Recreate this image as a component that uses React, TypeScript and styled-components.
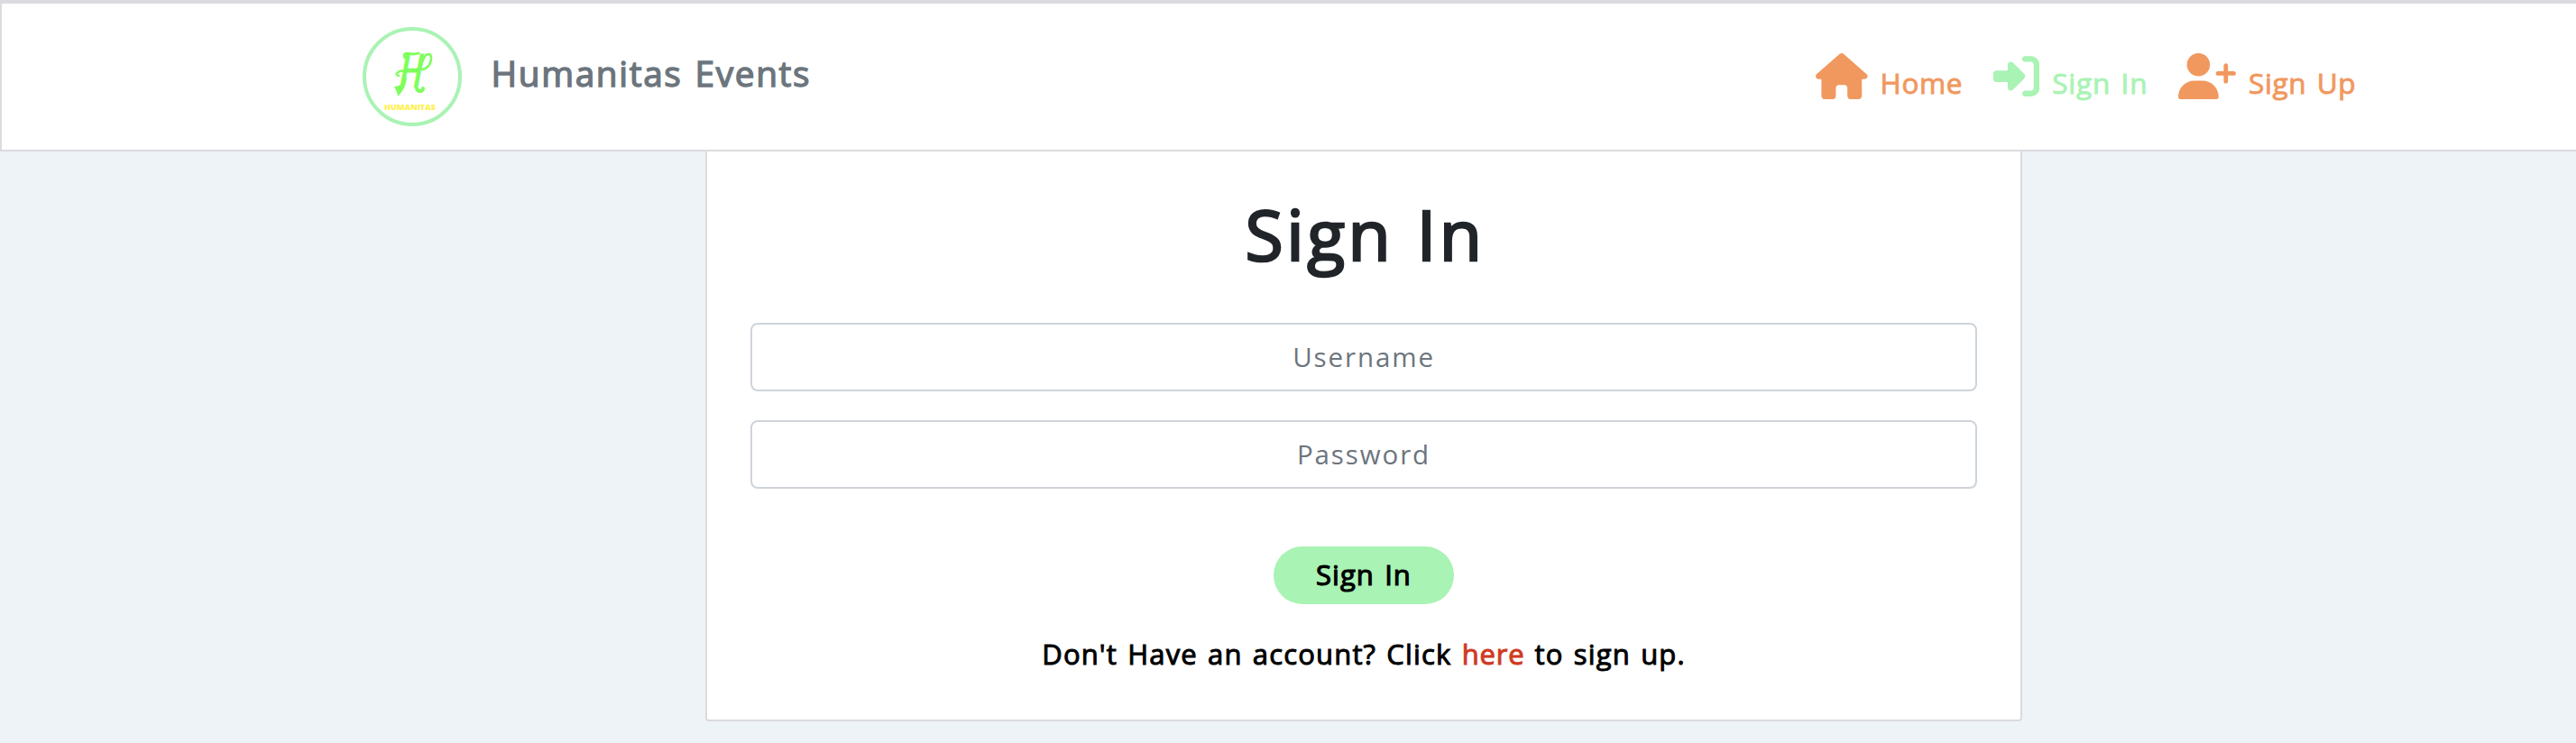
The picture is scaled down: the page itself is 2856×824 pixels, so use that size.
import React from "react";
import styled, { createGlobalStyle } from "styled-components";
import { FaHouse, FaRightToBracket, FaUserPlus } from "react-icons/fa6";

const GlobalStyle = createGlobalStyle`
  *, *::before, *::after { box-sizing: border-box; }
  body {
    margin: 0;
    background: #eef3f7;
    font-family: "Open Sans", "Liberation Sans", sans-serif;
  }
`;

const Page = styled.div`
  min-height: 824px;
`;

const NavBar = styled.header`
  display: flex;
  align-items: flex-start;
  height: 168px;
  padding: 0 238px 0 400px;
  background: #fff;
  border: solid #dbdbdf;
  border-width: 4px 0 2px 2px;
`;

const Brand = styled.a`
  display: flex;
  align-items: center;
  margin-top: 26px;
`;

const Logo = styled.svg`
  display: block;
  width: 110px;
  height: 110px;
`;

const LogoName = styled.text`
  font: 800 8.4px "Open Sans", sans-serif;
  fill: #fff04a;
`;

const Monogram = styled.text`
  font: italic bold 52px Lato, sans-serif;
  fill: #7dff5c;
`;

const BrandName = styled.span`
  margin: -9px 0 0 32.5px;
  font-size: 38.8px;
  line-height: 52px;
  letter-spacing: 1.62px;
  word-spacing: 2.5px;
  color: #6c757d;
  -webkit-text-stroke: 1.4px currentColor;
`;

const Links = styled.nav`
  display: grid;
  grid-template-columns: 197px 205px 203px;
  margin: 55px 0 0 auto;
`;

const NavLink = styled.a<{ $active?: boolean; $iconWidth: number }>`
  display: flex;
  align-items: flex-start;
  gap: 14px;
  color: ${(p) => (p.$active ? "#a9f3b4" : "#f1985f")};

  svg {
    flex: none;
    width: ${(p) => p.$iconWidth}px;
    height: 51.2px;
  }
`;

const LinkLabel = styled.span<{ $spacing: number }>`
  margin-top: 12px;
  font-size: 31.5px;
  line-height: 42px;
  letter-spacing: ${(p) => p.$spacing}px;
  word-spacing: 2.6px;
  white-space: nowrap;
  -webkit-text-stroke: 0.9px currentColor;
`;

const Card = styled.main`
  width: 1460px;
  height: 632px;
  margin-left: 782px;
  padding: 50px 48px 0;
  background: #fff;
  border: solid #dbdbdf;
  border-width: 0 2px 2px;
  border-radius: 0 0 4px 4px;
`;

const Form = styled.form`
  display: flex;
  flex-direction: column;
  align-items: center;
`;

const Title = styled.h1`
  margin: 0 0 56px;
  font-size: 77px;
  font-weight: 400;
  line-height: 84px;
  letter-spacing: 3.5px;
  word-spacing: 2px;
  text-indent: 3px;
  color: #212529;
  -webkit-text-stroke: 2.6px currentColor;
`;

const Field = styled.input`
  width: 1360px;
  height: 76px;
  margin-bottom: 32px;
  padding: 0 24px 2px;
  border: 2px solid #ced4da;
  border-radius: 8px;
  background: #fff;
  font: 400 29.5px "Open Sans", sans-serif;
  letter-spacing: 1.9px;
  text-align: center;
  outline: none;

  &::placeholder {
    color: #6c757d;
    opacity: 1;
  }
`;

const SubmitButton = styled.button`
  width: 200px;
  height: 64px;
  margin: 32px 0 0;
  padding: 0 0 2px;
  border: 0;
  border-radius: 32px;
  background: #a9f3b4;
  color: #000;
  font: 400 31px "Open Sans", sans-serif;
  letter-spacing: 1px;
  word-spacing: 2.4px;
  -webkit-text-stroke: 1.2px currentColor;
`;

const Prompt = styled.p`
  margin: 34px 0 0;
  font-size: 31px;
  line-height: 42px;
  letter-spacing: 1.16px;
  word-spacing: 2px;
  color: #000;
  -webkit-text-stroke: 1px currentColor;
`;

const PromptLink = styled.a`
  letter-spacing: 0.8px;
  color: #d03a22;
`;

function BrandLogo() {
  return (
    <Logo viewBox="0 0 110 110">
      <circle cx="55" cy="55" r="53" fill="#fff" stroke="#a9f3b4" strokeWidth="4" />
      <Monogram transform="translate(40 67) skewX(-6) scale(.68 1)">H</Monogram>
      <g fill="none" stroke="#7dff5c" strokeLinecap="round">
        <path d="M47 34C44 28 50 29 55 30C59 30 60 30 62 29" strokeWidth="3" />
        <path d="M66 47C76 46 79 30 73 30C69 30 66 38 64 46" strokeWidth="2.6" />
        <path d="M48 49C40 47 34 53 40 54" strokeWidth="2.4" />
        <path d="M67 68C67 72 61 72 60 68" strokeWidth="4" />
      </g>
      <path d="M47 56C45 64 39 66 35 66C37 70 39 73 39 77C44 72 48 66 49 56Z" fill="#7dff5c" />
      <LogoName x="24" y="92" textLength="57" lengthAdjust="spacingAndGlyphs">HUMANITAS</LogoName>
    </Logo>
  );
}

export default function App() {
  return (
    <Page>
      <GlobalStyle />
      <NavBar>
        <Brand>
          <BrandLogo />
          <BrandName>Humanitas Events</BrandName>
        </Brand>
        <Links>
          <NavLink $iconWidth={57.6}>
            <FaHouse />
            <LinkLabel $spacing={0.6}>Home</LinkLabel>
          </NavLink>
          <NavLink $iconWidth={51.2} $active>
            <FaRightToBracket />
            <LinkLabel $spacing={0.8}>Sign In</LinkLabel>
          </NavLink>
          <NavLink $iconWidth={64}>
            <FaUserPlus />
            <LinkLabel $spacing={0.65}>Sign Up</LinkLabel>
          </NavLink>
        </Links>
      </NavBar>
      <Card>
        <Form onSubmit={(e) => e.preventDefault()}>
          <Title>Sign In</Title>
          <Field type="text" placeholder="Username" />
          <Field type="password" placeholder="Password" />
          <SubmitButton type="submit">Sign In</SubmitButton>
          <Prompt>
            Don't Have an account? Click <PromptLink>here</PromptLink> to sign up.
          </Prompt>
        </Form>
      </Card>
    </Page>
  );
}
